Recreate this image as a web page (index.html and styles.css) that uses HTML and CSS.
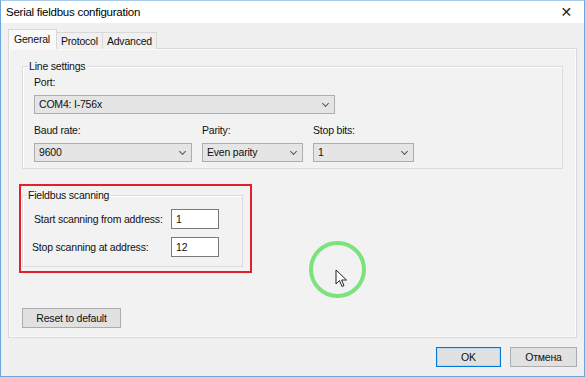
FILE: index.html
```html
<!DOCTYPE html>
<html lang="en">
<head>
  <meta charset="UTF-8" />
  <title>Serial fieldbus configuration</title>
  <link rel="stylesheet" href="styles.css">
</head>
<body>
  <div class="window">
    <div class="titlebar">
      <span class="title">Serial fieldbus configuration</span>
      <span class="close">&#x2715;</span>
    </div>

    <div class="client">
      <!-- Tabs -->
      <div class="tabs">
        <div class="tab active">General</div>
        <div class="tab">Protocol</div>
        <div class="tab">Advanced</div>
      </div>

      <div class="panel">
        <fieldset class="group line-settings">
          <legend>Line settings</legend>
          <div class="label">Port:</div>
          <div class="combo port">COM4: I-756x<span class="arrow"></span></div>
          <div class="row">
            <div class="col">
              <div class="label">Baud rate:</div>
              <div class="combo baud">9600<span class="arrow"></span></div>
            </div>
            <div class="col">
              <div class="label">Parity:</div>
              <div class="combo parity">Even parity<span class="arrow"></span></div>
            </div>
            <div class="col">
              <div class="label">Stop bits:</div>
              <div class="combo stop">1<span class="arrow"></span></div>
            </div>
          </div>
        </fieldset>

        <div class="highlight">
          <fieldset class="group scanning">
            <legend>Fieldbus scanning</legend>
            <div class="field">
              <span class="label">Start scanning from address:</span>
              <div class="input">1</div>
            </div>
            <div class="field stop-row">
              <span class="label">Stop scanning at address:</span>
              <div class="input">12</div>
            </div>
          </fieldset>
        </div>

        <div class="btn reset">Reset to default</div>
      </div>

      <div class="footer">
        <div class="btn ok">OK</div>
        <div class="btn">Отмена</div>
      </div>
    </div>

    <!-- click marker -->
    <div class="click-ring"></div>
    <svg class="cursor" width="14" height="20" viewBox="0 0 14 20">
      <path d="M1 1 L1 15 L4.5 11.5 L7 17.5 L9 16.6 L6.6 11 L11.5 11 Z" fill="#fff" stroke="#222" stroke-width="1" stroke-linejoin="round"/>
    </svg>
  </div>
</body>
</html>
```

FILE: styles.css
```css
body {
  margin: 0;
  background: #fff;
  font-family: 'Liberation Sans', Arial, sans-serif;
  font-size: 10.5px;
  letter-spacing: -0.2px;
  color: #111;
  white-space: nowrap;
}

.window {
  position: relative;
  width: 585px;
  height: 377px;
  box-sizing: border-box;
  border: 1px solid #6fa5d8;
  border-top-color: #a9c9e8;
  display: flex;
  flex-direction: column;
  overflow: hidden;
}

.titlebar {
  height: 22px;
  background: #fff;
  display: flex;
  align-items: center;
  justify-content: space-between;
  padding: 0 12px 0 5px;
  flex-shrink: 0;
}

.title {
  font-size: 11.5px;
  letter-spacing: -0.25px;
  color: #000;
}

.close {
  font-size: 14px;
  color: #222;
  font-family: 'DejaVu Sans', sans-serif;
}

.client {
  flex: 1;
  background: #f0f0f0;
  padding: 7px 7px 0 7px;
  display: flex;
  flex-direction: column;
}

.tabs {
  display: flex;
  align-items: flex-end;
  height: 19px;
  position: relative;
  z-index: 1;
}

.tab {
  height: 16px;
  line-height: 16px;
  padding: 0 4px;
  border: 1px solid #d9d9d9;
  border-bottom: none;
  background: #f0f0f0;
  margin-left: -1px;
}

.tab.active {
  height: 19px;
  line-height: 18px;
  background: #f9f9f9;
  margin-left: 0;
  padding: 0 6px 0 5px;
  position: relative;
}

.panel {
  height: 290px;
  box-sizing: border-box;
  border: 1px solid #d9d9d9;
  box-shadow: inset 0 0 0 1px #fafafa;
  background: #f2f2f2;
  margin-top: -1px;
  padding: 11px 11px 0 13px;
  display: flex;
  flex-direction: column;
  align-items: flex-start;
}

.group {
  margin: 0;
  border: 1px solid #dcdcdc;
  box-shadow: 1px 1px 0 #fff inset;
  padding: 0;
}

.group legend {
  padding: 0 1px;
}

.line-settings {
  width: 541px;
  box-sizing: border-box;
  height: 109px;
  padding: 4px 0 0 11px;
}

.line-settings legend {
  margin-left: -6px;
}

.label {
  line-height: 13px;
}

.line-settings .combo.port {
  width: 301px;
  margin-top: 6px;
  margin-bottom: 10px;
}

.row {
  display: flex;
  gap: 10px;
}

.row .combo {
  margin-top: 6px;
}

.combo {
  position: relative;
  height: 19px;
  box-sizing: border-box;
  background: #e5e5e5;
  border: 1px solid #adadad;
  padding-left: 4px;
  line-height: 17px;
}

.combo.baud { width: 158px; }
.combo.parity { width: 101px; }
.combo.stop { width: 101px; }

.arrow {
  position: absolute;
  right: 6px;
  top: 5px;
  width: 4px;
  height: 4px;
  border-right: 1px solid #555;
  border-bottom: 1px solid #555;
  transform: rotate(45deg);
}

.highlight {
  margin-top: 15px;
  margin-left: -3px;
  border: 2px solid #e3202a;
  padding: 3px 7px 4px 1px;
}

.scanning {
  width: 221px;
  box-sizing: border-box;
  height: 78px;
  padding: 8px 0 0 9px;
}

.scanning legend {
  margin-left: -5px;
}

.field {
  display: flex;
  align-items: center;
  justify-content: space-between;
  padding-right: 23px;
}

.field .label {
  padding-left: 2px;
}

.stop-row {
  margin-top: 8px;
}

.stop-row .label {
  padding-left: 0;
}

.input {
  width: 48px;
  height: 20px;
  box-sizing: border-box;
  background: #fff;
  border: 1px solid #7a7a7a;
  padding-left: 4px;
  line-height: 18px;
}

.btn {
  height: 20px;
  box-sizing: border-box;
  background: #e1e1e1;
  border: 1px solid #adadad;
  text-align: center;
  line-height: 18px;
}

.reset {
  width: 99px;
  margin-top: 35px;
  margin-left: 0;
}

.footer {
  display: flex;
  justify-content: flex-end;
  gap: 9px;
  padding: 9px 0 0 0;
}

.footer .btn {
  width: 67px;
}

.btn.ok {
  width: 65px;
  border-color: #0078d7;
  box-shadow: inset 0 0 0 1px #b8d7f2;
}

.click-ring {
  position: absolute;
  left: 308px;
  top: 240px;
  width: 49px;
  height: 49px;
  border: 4px solid #6fe06f;
  border-radius: 50%;
  opacity: 0.9;
}

.cursor {
  position: absolute;
  left: 334px;
  top: 268px;
}
```
